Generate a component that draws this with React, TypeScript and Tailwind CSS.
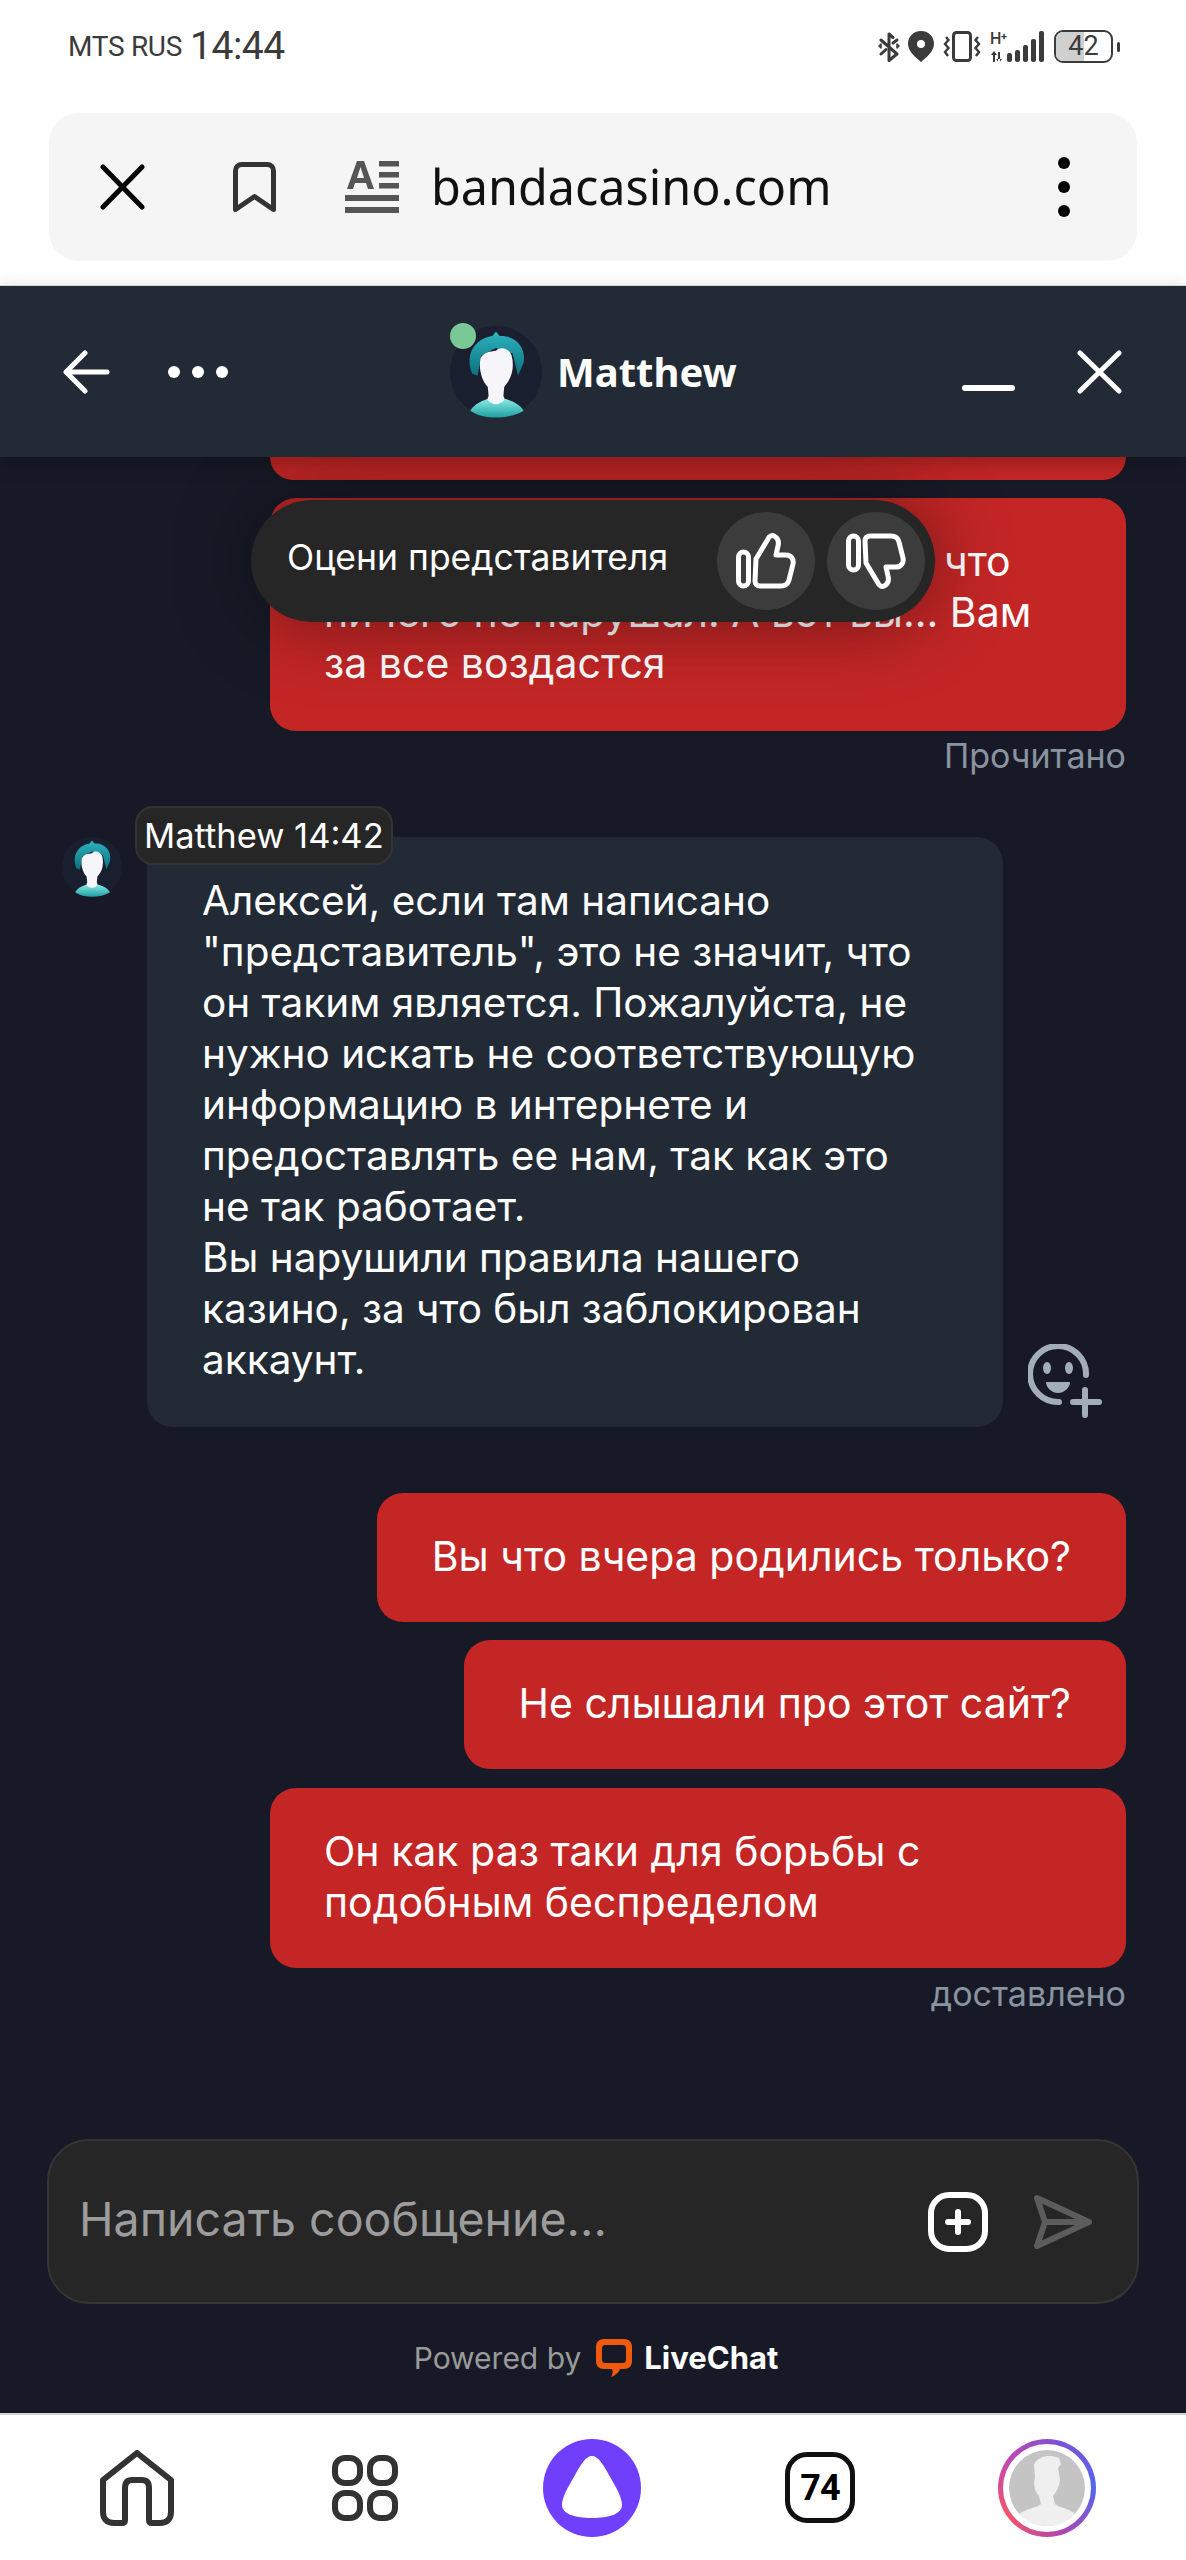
const FONT = "font-['Inter','Noto_Sans',sans-serif]"

function AgentAvatar({ className }: { className: string }) {
  return (
    <svg viewBox="0 0 100 100" className={className}>
      <defs>
        <linearGradient id="hair" x1="0" y1="0" x2="0" y2="1">
          <stop offset="0" stopColor="#2cb4c0" />
          <stop offset="1" stopColor="#0d6f7c" />
        </linearGradient>
        <linearGradient id="shirt" x1="0" y1="0" x2="0" y2="1">
          <stop offset="0" stopColor="#8ff0ec" />
          <stop offset="1" stopColor="#1f9ea0" />
        </linearGradient>
      </defs>
      <circle cx="50" cy="50" r="50" fill="#1a1f30" />
      <path d="M22 92 C27 84 36 81 44 78 H56 C66 81 75 84 80 92 C64 102 36 102 22 92Z" fill="url(#shirt)" />
      <path d="M24 52 C16 32 26 14 46 11 L50 6 L54 11 C72 10 83 24 80 40 L74 54 L68 30 L50 24 L34 32 L30 54Z" fill="url(#hair)" />
      <path d="M33 36 C36 28 44 28 50 27 C54 22 64 24 67 32 C70 44 68 56 59 66 L58 76 C61 80 57 84 50 85 C43 84 39 80 42 76 L41 66 C35 60 31 48 33 36Z" fill="#f6f5fa" />
    </svg>
  )
}

function StatusIcons() {
  return (
    <div className="flex items-center text-[#3b3b3b]">
      <svg viewBox="0 0 22 31" className="h-[31px] w-[22px]" fill="none" stroke="currentColor" strokeWidth="3" strokeLinecap="round" strokeLinejoin="round">
        <path d="M3 9 L19 23 L11 29.5 V3 L15 6.5" />
        <path d="M3 23 L8 18.5 M15 12 L19 9" />
        <path d="M1 15 L3 13 V17Z M21 15 L19 13 V17Z" strokeWidth="1.5" />
      </svg>
      <svg viewBox="0 0 26 31" className="ml-[8px] h-[31px] w-[26px]" fill="currentColor">
        <path fillRule="evenodd" d="M13 0 C21 0 26 6 26 13 C26 20 19 26 13 31 C7 26 0 20 0 13 C0 6 5 0 13 0Z M13 9 A4 4 0 1 0 13 17 A4 4 0 1 0 13 9Z" />
      </svg>
      <svg viewBox="0 0 38 31" className="ml-[9px] h-[31px] w-[38px]" fill="none" stroke="currentColor">
        <rect x="10.5" y="1.5" width="17" height="28" rx="3" strokeWidth="3" />
        <path d="M3 6 L5.5 9 L2 13 L5.5 17 L2 21 L5 25" strokeWidth="2.4" />
        <path d="M35 6 L32.5 9 L36 13 L32.5 17 L36 21 L33 25" strokeWidth="2.4" />
      </svg>
      <svg viewBox="0 0 56 31" className="ml-[9px] h-[31px] w-[56px]" fill="currentColor">
        <text x="0" y="13" fontSize="16" fontWeight="500" fontFamily="Roboto, sans-serif">H</text>
        <text x="11" y="9" fontSize="11" fontWeight="700" fontFamily="Roboto, sans-serif">+</text>
        <path d="M3 21 h2 v10 h-2z M1 24 L4 20 L7 24Z M8 21 h2 v10 h-2z M6 28 L9 32 L12 28Z" />
        <rect x="17" y="22" width="5" height="9" rx="2" />
        <rect x="25" y="19" width="5" height="12" rx="2" />
        <rect x="33" y="14" width="5" height="17" rx="2" />
        <rect x="41" y="8" width="5" height="23" rx="2" />
        <rect x="49" y="0" width="5" height="31" rx="2" />
      </svg>
      <div className="relative ml-[8px] flex h-[33px] w-[59px] items-center justify-center overflow-hidden rounded-[9px] border-[2px] border-[#3b3b3b] bg-white">
        <div className="absolute inset-y-0 left-0 w-[28px] bg-[#d0d0d0]" />
        <span className="relative font-['Roboto',sans-serif] text-[27px] leading-none font-normal">42</span>
      </div>
      <div className="ml-[4px] h-[10px] w-[3px] rounded-sm bg-[#3b3b3b]" />
    </div>
  )
}

function UrlBar() {
  return (
    <div className="mx-[49px] flex h-[148px] items-center rounded-[30px] bg-[#f5f5f5] pr-[67px] pl-[51px]">
      <svg viewBox="0 0 45 46" className="h-[46px] w-[45px]" fill="none" stroke="#050505" strokeWidth="5" strokeLinecap="round">
        <path d="M3 3 L42 43 M42 3 L3 43" />
      </svg>
      <svg viewBox="0 0 43 50" className="ml-[88px] h-[50px] w-[43px]" fill="none" stroke="#333" strokeWidth="5" strokeLinejoin="round">
        <path d="M2.5 47.5 V9 C2.5 5 5 2.5 9 2.5 H34 C38 2.5 40.5 5 40.5 9 V47.5 L21.5 34.5Z" />
      </svg>
      <svg viewBox="0 0 54 52" className="ml-[69px] h-[52px] w-[54px]" fill="#555">
        <path d="M2 28 L12 0 H19 L29 28 H23 L21 22 H10 L8 28Z M12 17 H19 L15.5 6Z" />
        <rect x="34" y="0" width="20" height="5.5" />
        <rect x="34" y="11" width="20" height="5.5" />
        <rect x="34" y="22" width="20" height="5.5" />
        <rect x="0" y="34" width="54" height="6" />
        <rect x="0" y="46" width="54" height="6" />
      </svg>
      <span className="-mt-[2px] ml-[32px] font-['Noto_Sans',sans-serif] text-[48.5px] leading-none text-[#111]">bandacasino.com</span>
      <div className="ml-auto flex flex-col gap-[12px]">
        <div className="size-[12px] rounded-full bg-[#050505]" />
        <div className="size-[12px] rounded-full bg-[#050505]" />
        <div className="size-[12px] rounded-full bg-[#050505]" />
      </div>
    </div>
  )
}

function ChatHeader() {
  return (
    <div className="relative z-10 flex h-[172px] items-center border-t border-[#d8d8d8] bg-[#222a35] pr-[64px] pl-[63px] shadow-[0_6px_18px_rgba(0,0,0,0.25)]">
      <svg viewBox="0 0 47 44" className="h-[44px] w-[47px]" fill="none" stroke="#fff" strokeWidth="5" strokeLinecap="round" strokeLinejoin="round">
        <path d="M44 22 H4 M22 3 L3 22 L22 41" />
      </svg>
      <div className="ml-[58px] flex gap-[12px]">
        <div className="size-[12px] rounded-full bg-white" />
        <div className="size-[12px] rounded-full bg-white" />
        <div className="size-[12px] rounded-full bg-white" />
      </div>
      <div className="relative ml-[222px] flex items-center">
        <AgentAvatar className="size-[92px]" />
        <div className="absolute top-[-3px] left-0 size-[26px] rounded-full bg-[#7ac896]" />
        <span className="ml-[15px] font-['Noto_Sans',sans-serif] text-[40px] leading-none font-bold text-white">Matthew</span>
      </div>
      <div className="mt-[32px] ml-auto h-[6px] w-[53px] rounded-full bg-white" />
      <svg viewBox="0 0 45 44" className="ml-[62px] h-[44px] w-[45px]" fill="none" stroke="#fff" strokeWidth="5" strokeLinecap="round">
        <path d="M3 3 L42 41 M42 3 L3 41" />
      </svg>
    </div>
  )
}

function Thumb({ flip }: { flip?: boolean }) {
  return (
    <div className="flex size-[98px] items-center justify-center rounded-full bg-[#3c3c3c]">
      <svg viewBox="0 0 60 56" className={`h-[56px] w-[60px] ${flip ? "-scale-y-100" : ""}`} fill="none" stroke="#fff" strokeWidth="5" strokeLinejoin="round">
        <rect x="2.5" y="19" width="10" height="34" rx="5" />
        <path d="M20 26 L32 6 C33 3 36 2 38 3 C42 5 43 9 42 13 L40 22 H50 C55 22 58 26 57 31 L53 47 C52 51 49 53 45 53 H24 C21 53 19 51 19 48 Z" />
      </svg>
    </div>
  )
}

function RatingPill() {
  return (
    <div className="absolute top-[43px] left-[251px] z-20 flex h-[122px] w-[684px] items-center rounded-full bg-[#262626] pr-[10px] pl-[36px] shadow-[0_0_80px_rgba(0,0,0,0.45)]">
      <span className={`-mt-[6px] text-[35.5px] leading-none text-white ${FONT}`}>Оцени представителя</span>
      <div className="ml-auto flex gap-[12px]">
        <Thumb />
        <Thumb flip />
      </div>
    </div>
  )
}

function Bubble({ children, wide, tall }: { children: React.ReactNode; wide?: boolean; tall?: boolean }) {
  return (
    <div className={`self-end rounded-[26px] bg-[#c42626] pt-[38px] text-[41px] leading-[51px] text-white ${tall ? "pb-[42px]" : "pb-[40px]"} ${wide ? "w-[856px] pr-[40px] pl-[54px]" : "px-[55px]"} ${FONT}`}>
      {children}
    </div>
  )
}

function Messages() {
  return (
    <div className="relative flex flex-1 flex-col overflow-hidden pr-[60px] pl-[62px]">
      <RatingPill />
      <div className="h-[23px] w-[856px] self-end rounded-b-[26px] bg-[#c42626]" />
      <div className="mt-[18px] self-end">
        <Bubble wide tall>
          Вы и сами можете проверить, что
          <br />
          ничего не нарушал. А вот вы... Вам
          <br />
          за все воздастся
        </Bubble>
      </div>
      <span className={`mt-[7px] self-end text-[34px] leading-[36px] text-[#8a93a0] ${FONT}`}>Прочитано</span>

      <div className="relative mt-[63px] flex items-start">
        <AgentAvatar className="size-[60px]" />
        <div className={`absolute top-[-31px] left-[73px] rounded-[18px] border-[2px] border-[#333] bg-[#262626] px-[7px] py-[8px] text-[34.5px] leading-[39px] text-white ${FONT}`}>
          Matthew 14:42
        </div>
        <div className={`ml-[25px] w-[856px] rounded-[26px] bg-[#222a35] pt-[38px] pb-[42px] pl-[55px] text-[40.5px] leading-[51px] text-white ${FONT}`}>
          Алексей, если там написано
          <br />
          "представитель", это не значит, что
          <br />
          он таким является. Пожалуйста, не
          <br />
          нужно искать не соответствующую
          <br />
          информацию в интернете и
          <br />
          предоставлять ее нам, так как это
          <br />
          не так работает.
          <br />
          Вы нарушили правила нашего
          <br />
          казино, за что был заблокирован
          <br />
          аккаунт.
        </div>
        <svg viewBox="0 0 74 74" className="mt-[507px] ml-[25px] size-[74px]" fill="none" stroke="#a3adba" strokeWidth="6" strokeLinecap="round">
          <path d="M31 58 A28 28 0 1 1 58 31" />
          <ellipse cx="19" cy="24" rx="4" ry="6" fill="#a3adba" stroke="none" />
          <ellipse cx="41" cy="24" rx="4" ry="6" fill="#a3adba" stroke="none" />
          <path d="M18 38 H42 C42 44 36 49 30 49 C24 49 18 44 18 38Z" fill="#a3adba" stroke="none" />
          <path d="M57 46 V71 M45 58 H71" />
        </svg>
      </div>

      <div className="mt-[66px] self-end">
        <Bubble>Вы что вчера родились только?</Bubble>
      </div>
      <div className="mt-[18px] self-end">
        <Bubble>Не слышали про этот сайт?</Bubble>
      </div>
      <div className="mt-[19px] self-end">
        <Bubble wide>
          Он как раз таки для борьбы с
          <br />
          подобным беспределом
        </Bubble>
      </div>
      <span className={`mt-[8px] self-end text-[34px] leading-[36px] text-[#8a93a0] ${FONT}`}>доставлено</span>
    </div>
  )
}

function Composer() {
  return (
    <div className="mx-[47px] flex h-[165px] items-center rounded-[42px] border-[2px] border-[#353535] bg-[#262626] pr-[44px] pl-[30px]">
      <span className={`-mt-[4px] text-[46.5px] leading-none text-[#9c9c9c] ${FONT}`}>Написать сообщение...</span>
      <svg viewBox="0 0 60 60" className="ml-auto size-[60px]" fill="none" stroke="#fff" strokeLinecap="round">
        <rect x="3" y="3" width="54" height="54" rx="18" strokeWidth="6" />
        <path d="M30 20 V40 M20 30 H40" strokeWidth="6" />
      </svg>
      <svg viewBox="0 0 60 56" className="ml-[45px] h-[56px] w-[60px]" fill="none" stroke="#5c5c5c" strokeWidth="6" strokeLinejoin="round" strokeLinecap="round">
        <path d="M4 4 L56 28 L4 52 L12 28Z M12 28 H56" />
      </svg>
    </div>
  )
}

function PoweredBy() {
  return (
    <div className="flex h-[109px] items-center justify-center pb-[2px] pl-[6px]">
      <span className={`text-[30px] leading-none text-[#9a9a9a] ${FONT}`}>Powered by</span>
      <svg viewBox="0 0 36 38" className="ml-[15px] h-[38px] w-[36px]" fill="#f05a0e">
        <path fillRule="evenodd" d="M8 0 H28 C33 0 36 3 36 8 V22 C36 27 33 30 28 30 H24 C23 33 19 37 15 38 C17 35 17 32 16 30 H8 C3 30 0 27 0 22 V8 C0 3 3 0 8 0Z M10 6 C7 6 6 7 6 10 V20 C6 23 7 24 10 24 H26 C29 24 30 23 30 20 V10 C30 7 29 6 26 6Z" />
      </svg>
      <span className={`ml-[12px] text-[31px] leading-none font-bold text-white ${FONT}`}>LiveChat</span>
    </div>
  )
}

function BottomNav() {
  return (
    <div className="flex h-[147px] items-center border-t-[2px] border-[#d4d4d4] bg-white pl-[100px]">
      <svg viewBox="0 0 74 76" className="h-[76px] w-[74px]" fill="none" stroke="#333" strokeWidth="6" strokeLinejoin="round">
        <path d="M37 3 L71 30 V62 C71 69 67 73 60 73 H52 C50 73 49 72 49 70 V38 C49 32 46 30 42 30 H32 C28 30 25 32 25 38 V70 C25 72 24 73 22 73 H14 C7 73 3 69 3 62 V30Z" />
      </svg>
      <svg viewBox="0 0 66 66" className="ml-[158px] size-[66px]" fill="none" stroke="#333" strokeWidth="6">
        <rect x="3" y="3" width="25" height="25" rx="10" />
        <rect x="38" y="3" width="25" height="25" rx="10" />
        <rect x="3" y="38" width="25" height="25" rx="10" />
        <rect x="38" y="38" width="25" height="25" rx="10" />
      </svg>
      <svg viewBox="0 0 98 98" className="ml-[145px] size-[98px]">
        <circle cx="49" cy="49" r="49" fill="#6f3ffb" />
        <path d="M49 17 C55 17 60 25 66 36 C73 48 79 58 79 66 C79 75 66 79 49 79 C32 79 19 75 19 66 C19 58 25 48 32 36 C38 25 43 17 49 17Z" fill="#fff" />
      </svg>
      <div className="ml-[144px] flex h-[71px] w-[70px] items-center justify-center rounded-[22px] border-[5px] border-[#111] font-['Roboto',sans-serif] text-[36px] leading-none font-bold tracking-[-1px] text-black">
        74
      </div>
      <div className="ml-[143px] flex size-[98px] items-center justify-center rounded-full bg-[conic-gradient(from_90deg,#5566ee,#b044b0,#f4556a,#c248b0,#7a50d8,#5566ee)]">
        <div className="flex size-[88px] items-center justify-center rounded-full bg-white">
          <svg viewBox="0 0 76 76" className="size-[76px]">
            <circle cx="38" cy="38" r="38" fill="#c4c4c4" />
            <path d="M10 64 C18 58 28 58 32 54 L30 46 C26 42 24 34 26 28 L25 14 C30 6 40 4 50 8 L52 14 L49 18 L51 30 C50 38 46 44 44 46 L46 54 C50 58 60 58 66 64 C58 72 48 76 38 76 C28 76 18 72 10 64Z" fill="#efefef" />
          </svg>
        </div>
      </div>
    </div>
  )
}

export default function App() {
  return (
    <div className="flex h-[2560px] w-[1186px] flex-col overflow-hidden bg-white">
      <div className="flex h-[113px] items-center pr-[66px] pb-[20px] pl-[68px] text-[#3b3b3b]">
        <span className="font-['Roboto',sans-serif] text-[28px] leading-none tracking-[-0.3px]">MTS RUS</span>
        <span className="ml-[8px] font-['Roboto',sans-serif] text-[39px] leading-none tracking-[-0.5px]">14:44</span>
        <div className="ml-auto">
          <StatusIcons />
        </div>
      </div>
      <UrlBar />
      <div className="h-[24px]" />
      <ChatHeader />
      <div className="flex flex-1 flex-col bg-[#171a26]">
        <Messages />
        <Composer />
        <PoweredBy />
      </div>
      <BottomNav />
    </div>
  )
}
